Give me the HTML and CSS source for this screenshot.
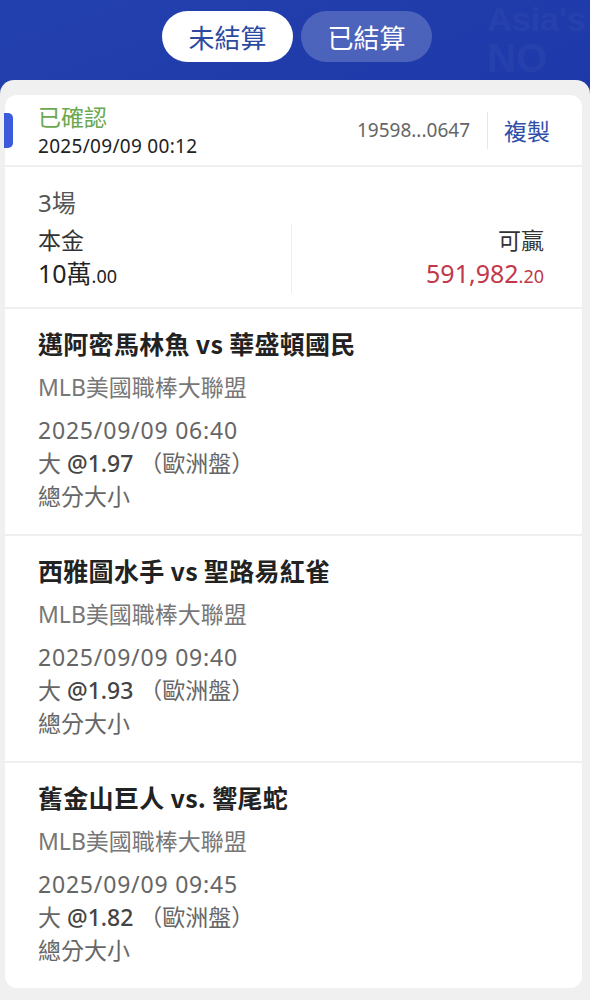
FILE: index.html
```html
<!DOCTYPE html>
<html lang="zh-Hant">
<head>
    <meta charset="UTF-8">
    <meta name="viewport" content="width=device-width, initial-scale=1.0">
    <title>注單</title>
    <link rel="stylesheet" href="styles.css">
</head>
<body>
    <div class="top">
        <div class="watermark">
            <span class="wm-line1">Asia's</span>
            <span class="wm-line2">NO</span>
        </div>
        <div class="tabs">
            <button class="tab active">未結算</button>
            <button class="tab">已結算</button>
        </div>
    </div>

    <div class="panel">
        <div class="card">
            <div class="card-head">
                <span class="marker"></span>
                <div class="head-left">
                    <div class="status">已確認</div>
                    <div class="placed">2025/09/09 00:12</div>
                </div>
                <div class="head-right">
                    <span class="order-id">19598...0647</span>
                    <span class="vline"></span>
                    <span class="copy">複製</span>
                </div>
            </div>

            <div class="summary">
                <div class="count">3場</div>
                <div class="amounts">
                    <div class="col">
                        <div class="label">本金</div>
                        <div class="value">10萬<small>.00</small></div>
                    </div>
                    <div class="col right">
                        <div class="label">可贏</div>
                        <div class="value win">591,982<small>.20</small></div>
                    </div>
                </div>
            </div>

            <div class="match">
                <div class="teams">邁阿密馬林魚 vs 華盛頓國民</div>
                <div class="league">MLB美國職棒大聯盟</div>
                <div class="start">2025/09/09 06:40</div>
                <div class="pick">大 <b>@1.97</b> （歐洲盤）</div>
                <div class="market">總分大小</div>
            </div>

            <div class="match">
                <div class="teams">西雅圖水手 vs 聖路易紅雀</div>
                <div class="league">MLB美國職棒大聯盟</div>
                <div class="start">2025/09/09 09:40</div>
                <div class="pick">大 <b>@1.93</b> （歐洲盤）</div>
                <div class="market">總分大小</div>
            </div>

            <div class="match">
                <div class="teams">舊金山巨人 vs. 響尾蛇</div>
                <div class="league">MLB美國職棒大聯盟</div>
                <div class="start">2025/09/09 09:45</div>
                <div class="pick">大 <b>@1.82</b> （歐洲盤）</div>
                <div class="market">總分大小</div>
            </div>
        </div>
    </div>
</body>
</html>
```

FILE: styles.css
```css
body {
    font-family: "Noto Sans", "Noto Sans CJK TC", sans-serif;
    margin: 0;
    padding: 0;
    background: linear-gradient(160deg, #2341ae 0%, #1b33a6 40%, #1a31a3 100%);
    color: #222;
}

.top {
    position: relative;
    height: 80px;
}

.watermark {
    position: absolute;
    right: 4px;
    top: 2px;
    display: flex;
    flex-direction: column;
    font-family: "Liberation Sans", Arial, sans-serif;
    font-weight: bold;
    color: rgba(255, 255, 255, 0.05);
    line-height: 1;
}

.wm-line1 {
    font-size: 34px;
}

.wm-line2 {
    font-size: 40px;
    margin-top: 2px;
}

.tabs {
    position: relative;
    display: flex;
    justify-content: center;
    gap: 8px;
    padding-top: 11px;
    padding-left: 4px;
}

.tab {
    height: 51px;
    width: 131px;
    border: none;
    border-radius: 26px;
    font-family: "Noto Sans CJK TC", sans-serif;
    font-size: 26px;
    background-color: rgba(255, 255, 255, 0.2);
    color: #fff;
    padding: 0;
}

.tab.active {
    background-color: #fff;
    color: #2c4aa0;
}

.panel {
    position: relative;
    background-color: #f0f0f0;
    border-radius: 14px 14px 0 0;
    padding: 15px 8px 10px 5px;
    min-height: 895px;
}

.card {
    background-color: #fff;
    border-radius: 12px;
}

.card-head {
    position: relative;
    display: flex;
    justify-content: space-between;
    align-items: center;
    height: 70px;
    padding: 0 32px 0 33px;
}

.marker {
    position: absolute;
    left: -1px;
    top: 18px;
    width: 9px;
    height: 35px;
    border-radius: 0 5px 5px 0;
    background-color: #3b5bdb;
}

.head-left {
    margin-top: -3px;
}

.status {
    font-family: "Noto Sans CJK TC", sans-serif;
    font-size: 23px;
    line-height: 34px;
    color: #6aa84f;
}

.placed {
    font-size: 19px;
    line-height: 26px;
    letter-spacing: 0.3px;
    color: #222;
}

.head-right {
    display: flex;
    align-items: center;
}

.order-id {
    font-size: 19px;
    color: #666;
}

.vline {
    width: 1px;
    height: 37px;
    background-color: #e6e6e6;
    margin: 0 16px 0 17px;
}

.copy {
    font-family: "Noto Sans CJK TC", sans-serif;
    font-size: 23px;
    color: #2f4ea8;
}

.summary {
    border-top: 2px solid #efefef;
    padding: 21px 38px 14px 33px;
}

.count {
    font-size: 24px;
    line-height: 30px;
    color: #555;
}

.amounts {
    display: flex;
    margin-top: 6px;
}

.col {
    flex: 1;
    border-right: 1px solid #eee;
}

.col.right {
    text-align: right;
    border-right: none;
}

.label {
    font-size: 23px;
    line-height: 32px;
    color: #333;
}

.value {
    font-size: 25px;
    line-height: 34px;
    color: #222;
}

.value small {
    font-size: 18px;
}

.value.win {
    color: #c2384a;
}

.match {
    border-top: 2px solid #efefef;
    padding: 17px 33px 21px;
    color: #666;
}

.teams {
    font-family: "Noto Sans CJK TC", sans-serif;
    font-size: 25px;
    line-height: 34px;
    letter-spacing: 0.3px;
    font-weight: bold;
    color: #222;
}

.league {
    font-size: 23px;
    line-height: 34px;
    margin-top: 10px;
    color: #777;
}

.start {
    font-size: 23px;
    line-height: 34px;
    letter-spacing: 0.8px;
    margin-top: 9px;
}

.pick {
    font-size: 23px;
    line-height: 33px;
}

.pick b {
    color: #444;
    font-weight: 500;
}

.market {
    font-size: 23px;
    line-height: 33px;
}
```
